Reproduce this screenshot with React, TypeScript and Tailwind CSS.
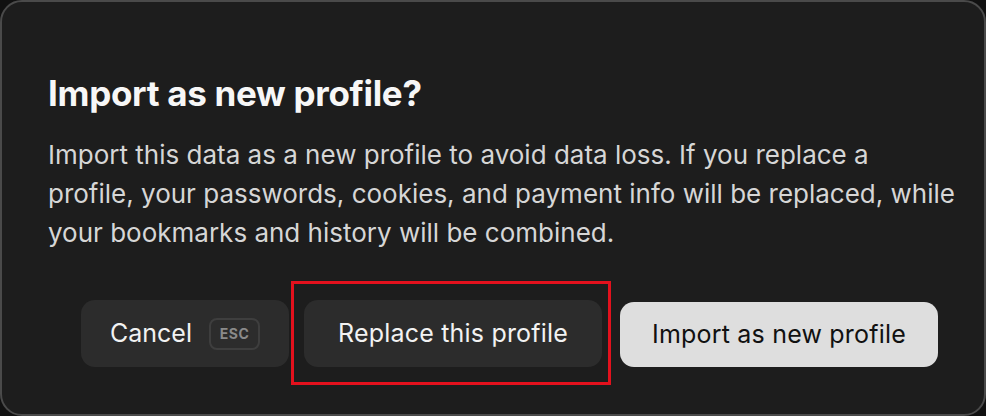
import React from 'react';

const App: React.FC = () => {
  return (
    <div className="w-[986px] h-[416px] bg-[#111111] font-['Inter',sans-serif]">
      <div className="w-[986px] h-[416px] bg-[#1d1d1d] rounded-[22px] border-2 border-[#4a4a4a] px-[46px] pt-[71px]">
        {/* Title */}
        <h1 className="text-[35px] leading-[40px] font-bold text-[#f7f7f7] tracking-[-0.3px]">
          Import as new profile?
        </h1>

        {/* Body */}
        <p className="mt-[22px] text-[26px] leading-[39px] text-[#d6d6d6] whitespace-nowrap">
          Import this data as a new profile to avoid data loss. If you replace a
          <br />
          profile, your passwords, cookies, and payment info will be replaced, while
          <br />
          your bookmarks and history will be combined.
        </p>

        {/* Actions */}
        <div className="mt-[48px] flex justify-end">
          <button className="h-[67px] w-[208px] rounded-[14px] bg-[#2c2c2c] flex items-center justify-center gap-[17px] text-[25px] text-[#f2f2f2]">
            <span>Cancel</span>
            <span className="h-[32px] w-[51px] rounded-[8px] border-2 border-[#3e3e3e] flex items-center justify-center text-[14px] font-bold tracking-[0.5px] text-[#8a8a8a]">
              ESC
            </span>
          </button>
          <div className="relative ml-[15px]">
            <button className="h-[67px] w-[298px] rounded-[14px] bg-[#2c2c2c] text-[25px] text-[#f2f2f2] tracking-[0.2px]">
              Replace this profile
            </button>
            {/* highlight annotation */}
            <div className="absolute -left-[13px] -right-[9px] -top-[19px] -bottom-[18px] border-[3px] border-[#e3111d] pointer-events-none" />
          </div>
          <button className="ml-[18px] h-[65px] w-[318px] rounded-[14px] bg-[#dedede] text-[25px] text-[#111111] tracking-[0.2px] self-end">
            Import as new profile
          </button>
        </div>
      </div>
    </div>
  );
};

export default App;
